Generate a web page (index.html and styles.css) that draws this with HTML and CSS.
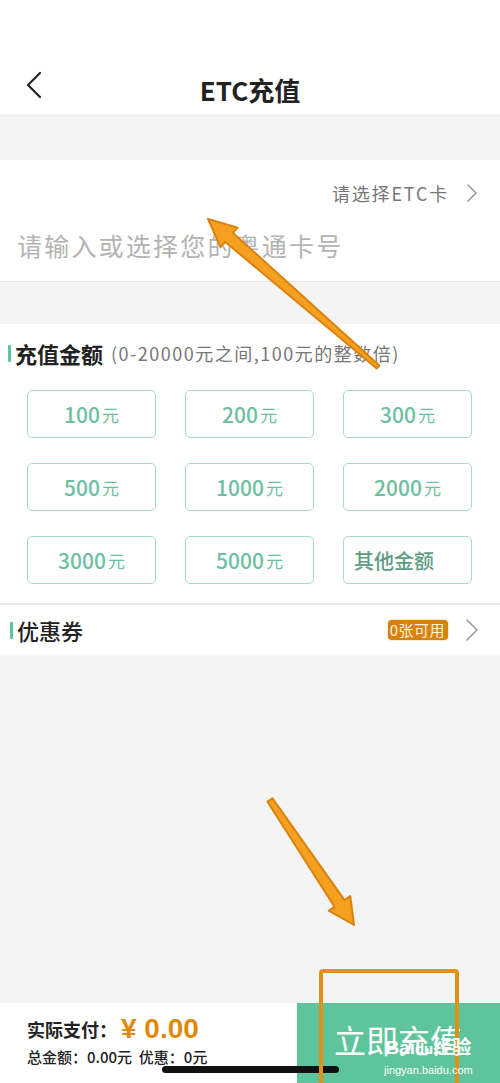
FILE: index.html
```html
<!DOCTYPE html>
<html lang="zh-CN">
<head>
  <meta charset="UTF-8" />
  <meta name="viewport" content="width=device-width, initial-scale=1.0"/>
  <title>ETC充值</title>
  <link rel="stylesheet" href="styles.css">
</head>
<body>
  <div class="page">
    <header>
      <div class="statusbar"></div>
      <div class="navbar">
        <span class="back">
          <svg width="18" height="28" viewBox="0 0 18 28"><path d="M15 2 L3 14 L15 26" fill="none" stroke="#222" stroke-width="2.2" stroke-linecap="round" stroke-linejoin="round"/></svg>
        </span>
        <h1>ETC充值</h1>
      </div>
    </header>

    <div class="gap gap-top"></div>

    <section class="card-input">
      <div class="card-select">
        <span>请选择ETC卡</span>
        <svg class="chevron" width="12" height="20" viewBox="0 0 12 20"><path d="M2 2 L10 10 L2 18" fill="none" stroke="#999" stroke-width="1.6" stroke-linecap="round" stroke-linejoin="round"/></svg>
      </div>
      <div class="card-field">请输入或选择您的粤通卡号</div>
    </section>

    <div class="gap gap-mid"></div>

    <section class="amount">
      <div class="section-title">
        <span class="mark"></span>
        <strong>充值金额</strong>
        <span class="hint">(0-20000元之间,100元的整数倍)</span>
      </div>
      <div class="amount-grid">
        <div class="amount-btn">100<small>元</small></div>
        <div class="amount-btn">200<small>元</small></div>
        <div class="amount-btn">300<small>元</small></div>
        <div class="amount-btn">500<small>元</small></div>
        <div class="amount-btn">1000<small>元</small></div>
        <div class="amount-btn">2000<small>元</small></div>
        <div class="amount-btn">3000<small>元</small></div>
        <div class="amount-btn">5000<small>元</small></div>
        <div class="amount-btn other">其他金额</div>
      </div>
    </section>

    <section class="coupon">
      <div class="section-title">
        <span class="mark"></span>
        <strong>优惠券</strong>
      </div>
      <div class="coupon-right">
        <span class="badge">0张可用</span>
        <svg class="chevron" width="16" height="24" viewBox="0 0 16 24"><path d="M3 2 L13 12 L3 22" fill="none" stroke="#999" stroke-width="1.6" stroke-linecap="round" stroke-linejoin="round"/></svg>
      </div>
    </section>

    <div class="spacer"></div>

    <footer class="paybar">
      <div class="pay-info">
        <div class="pay-line">
          <span>实际支付：</span>
          <span class="price">¥ 0.00</span>
        </div>
        <div class="pay-sub">总金额：0.00元&nbsp;&nbsp;优惠：0元</div>
      </div>
      <div class="pay-btn">立即充值</div>
    </footer>

    <div class="home-indicator"></div>

    <!-- annotation layer from the tutorial screenshot -->
    <svg class="marks" width="500" height="1083" viewBox="0 0 500 1083">
      <g fill="#f5a020" stroke="#d9820c" stroke-width="2" stroke-linejoin="round">
        <polygon points="208,219 237.6,227.6 233,232.9 379.3,365.5 376.7,368.5 225.2,241.9 220.6,247.2"/>
        <polygon points="354,925 350.3,896.1 344.5,900.1 272.5,798.3 267.5,801.7 334.5,906.7 328.7,910.7"/>
      </g>
      <rect x="321" y="971" width="136" height="118" rx="2" fill="none" stroke="#e3901a" stroke-width="4"/>
    </svg>

    <div class="watermark">
      <div class="wm-logo">Bai<span class="paw">du</span>经验</div>
      <div class="wm-url">jingyan.baidu.com</div>
    </div>
  </div>
</body>
</html>
```

FILE: styles.css
```css
:root {
  --green: #5ec49c;
  --green-text: #6cbf9f;
  --green-line: #a6dcc7;
  --bg: #f4f4f4;
  --text: #222;
  --sub: #777;
  --orange: #e0890a;
}

* {
  box-sizing: border-box;
}

body {
  margin: 0;
  padding: 0;
  font-family: "Noto Sans CJK SC", "Liberation Sans", sans-serif;
  color: var(--text);
  background: var(--bg);
}

.page {
  position: relative;
  width: 500px;
  height: 1083px;
  overflow: hidden;
  display: flex;
  flex-direction: column;
  background: var(--bg);
}

header {
  background: #fff;
  border-bottom: 1px solid #e6e6e6;
}

.statusbar {
  height: 64px;
}

.navbar {
  height: 51px;
  display: flex;
  align-items: center;
  justify-content: center;
  position: relative;
}

.back {
  position: absolute;
  left: 25px;
  top: 7px;
}

.navbar h1 {
  margin: 0;
  font-size: 26px;
  font-weight: 700;
  line-height: 51px;
}

.gap-top {
  height: 44px;
}

.card-input {
  background: #fff;
  height: 122px;
  border-bottom: 1px solid #e6e6e6;
  padding: 20px 22px 0 17px;
}

.card-select {
  display: flex;
  justify-content: flex-end;
  align-items: center;
  gap: 17px;
  font-size: 18px;
  letter-spacing: 1.8px;
  color: var(--sub);
  height: 26px;
}

.card-field {
  margin-top: 21px;
  font-size: 25px;
  color: #b3b3b3;
  letter-spacing: 2.2px;
}

.gap-mid {
  height: 42px;
}

.amount {
  background: #fff;
  padding: 13px 28px 19px 27px;
  border-bottom: 2px solid #ececec;
}

.section-title {
  display: flex;
  align-items: center;
  gap: 4px;
}

.amount .section-title {
  margin-left: -19px;
}

.mark {
  width: 3px;
  height: 17px;
  background: var(--green);
  border-radius: 1px;
}

.section-title strong {
  font-size: 22px;
  font-weight: 700;
}

.hint {
  font-size: 18px;
  letter-spacing: 1.5px;
  color: var(--sub);
  margin-left: 4px;
}

.amount-grid {
  margin-top: 21px;
  display: grid;
  grid-template-columns: repeat(3, 129px);
  column-gap: 29px;
  row-gap: 25px;
}

.amount-btn {
  height: 48px;
  border: 1.5px solid var(--green-line);
  border-radius: 5px;
  display: flex;
  align-items: center;
  justify-content: center;
  font-size: 21px;
  font-weight: 500;
  color: var(--green-text);
}

.amount-btn small {
  font-size: 17px;
  font-weight: 400;
  margin-left: 2px;
}

.amount-btn.other {
  justify-content: flex-start;
  padding-left: 10px;
  font-size: 20px;
  font-weight: 500;
  color: #5e9c84;
}

.coupon {
  background: #fff;
  height: 50px;
  display: flex;
  align-items: center;
  justify-content: space-between;
  padding: 0 20px 0 10px;
}

.coupon .section-title strong {
  font-size: 22px;
  font-weight: 500;
}

.coupon-right {
  display: flex;
  align-items: center;
  gap: 16px;
}

.badge {
  background: #d7810e;
  color: #fff4dc;
  font-size: 15px;
  line-height: 20px;
  padding: 0 3px 0 2px;
  letter-spacing: 0.5px;
  border-radius: 4px;
  box-shadow: 0 0 2px #f0b060;
}

.spacer {
  flex: 1;
}

.paybar {
  height: 80px;
  display: flex;
  background: #fff;
}

.pay-info {
  flex: 1;
  padding: 10px 0 0 27px;
}

.pay-line {
  display: flex;
  align-items: center;
  font-size: 18px;
  font-weight: 700;
  height: 32px;
}

.price {
  color: var(--orange);
  font-size: 28px;
  font-family: "Liberation Sans", sans-serif;
  margin-left: 4px;
}

.pay-sub {
  font-size: 15px;
  font-weight: 500;
  margin-top: 1px;
}

.pay-btn {
  width: 203px;
  background: var(--green);
  color: #fff;
  font-size: 32px;
  display: flex;
  align-items: center;
  padding-left: 37px;
  padding-bottom: 8px;
}

.home-indicator {
  position: absolute;
  left: 162px;
  top: 1066px;
  width: 177px;
  height: 7px;
  border-radius: 4px;
  background: #111;
}

.marks {
  position: absolute;
  left: 0;
  top: 0;
  pointer-events: none;
}

.watermark {
  position: absolute;
  left: 384px;
  top: 1037px;
  color: #fff;
  text-align: center;
}

.wm-logo {
  font-family: "Liberation Sans", "Noto Sans CJK SC", sans-serif;
  font-size: 19px;
  font-weight: 700;
  line-height: 22px;
}

.wm-logo .paw {
  font-size: 15px;
}

.wm-url {
  font-family: "Liberation Sans", sans-serif;
  font-size: 11px;
  line-height: 16px;
  margin-top: 2px;
}
```
